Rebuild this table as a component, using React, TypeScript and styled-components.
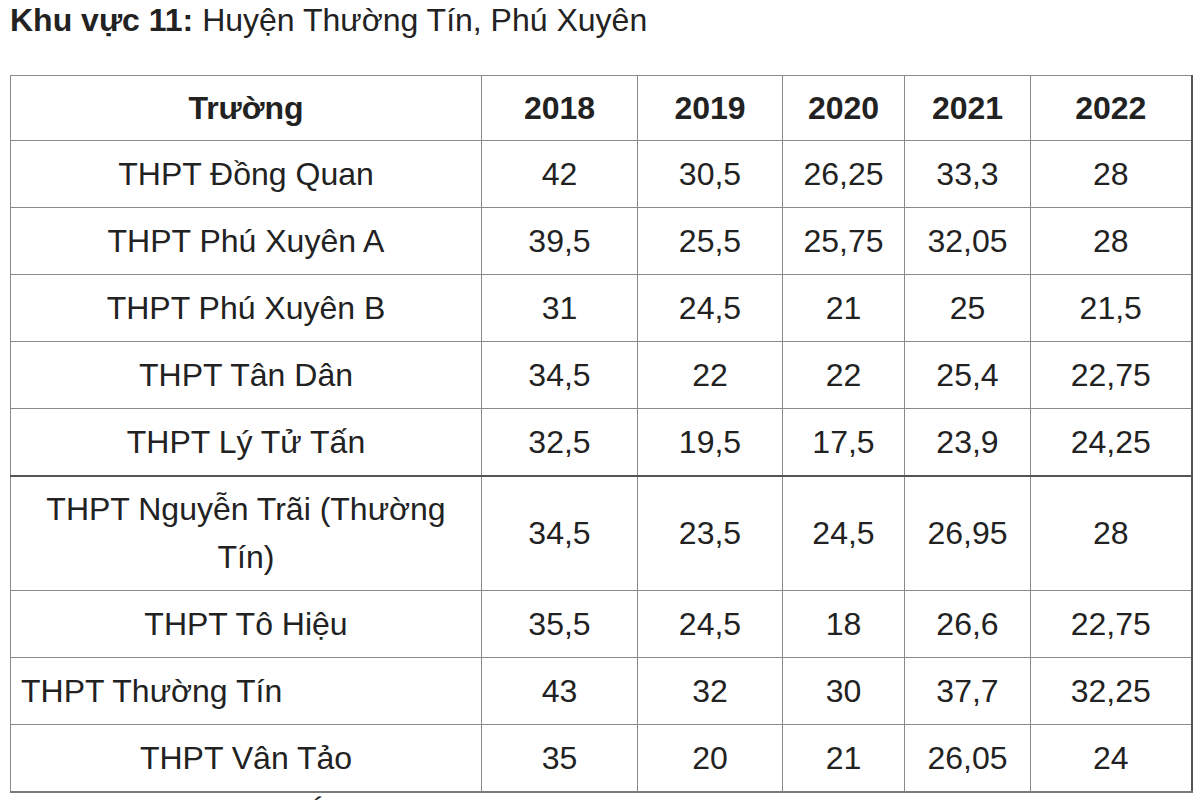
import styled, { createGlobalStyle } from 'styled-components';

const GlobalStyle = createGlobalStyle`
  html, body {
    margin: 0;
    padding: 0;
    background: #ffffff;
  }
  body {
    font-family: 'Liberation Sans', Arial, Helvetica, sans-serif;
    color: #222222;
  }
`;

type TRow = {
  school: string;
  scores: string[];
  align?: 'left' | 'center';
  thickTop?: boolean;
};

const YEARS = ['2018', '2019', '2020', '2021', '2022'];
const COL_WIDTHS = [471, 156, 145, 122, 126, 161];

const ROWS: TRow[] = [
  { school: 'THPT Đồng Quan', scores: ['42', '30,5', '26,25', '33,3', '28'] },
  { school: 'THPT Phú Xuyên A', scores: ['39,5', '25,5', '25,75', '32,05', '28'] },
  { school: 'THPT Phú Xuyên B', scores: ['31', '24,5', '21', '25', '21,5'] },
  { school: 'THPT Tân Dân', scores: ['34,5', '22', '22', '25,4', '22,75'] },
  { school: 'THPT Lý Tử Tấn', scores: ['32,5', '19,5', '17,5', '23,9', '24,25'] },
  {
    school: 'THPT Nguyễn Trãi (Thường Tín)',
    scores: ['34,5', '23,5', '24,5', '26,95', '28'],
    thickTop: true,
  },
  { school: 'THPT Tô Hiệu', scores: ['35,5', '24,5', '18', '26,6', '22,75'] },
  { school: 'THPT Thường Tín', scores: ['43', '32', '30', '37,7', '32,25'], align: 'left' },
  { school: 'THPT Vân Tảo', scores: ['35', '20', '21', '26,05', '24'] },
];

export default function App() {
  return (
    <>
      <GlobalStyle />
      <Page>
        <Heading>
          <strong>Khu vực 11:</strong> Huyện Thường Tín, Phú Xuyên
        </Heading>
        <ScoreTable>
          <colgroup>
            {COL_WIDTHS.map((w, i) => (
              <col key={i} style={{ width: w }} />
            ))}
          </colgroup>
          <thead>
            <tr>
              <HeadCell>Trường</HeadCell>
              {YEARS.map((y) => (
                <HeadCell key={y}>{y}</HeadCell>
              ))}
            </tr>
          </thead>
          <tbody>
            {ROWS.map((row) => (
              <BodyRow key={row.school} $thickTop={!!row.thickTop}>
                <Cell $align={row.align ?? 'center'}>{row.school}</Cell>
                {row.scores.map((s, i) => (
                  <Cell key={i} $align='center'>
                    {s}
                  </Cell>
                ))}
              </BodyRow>
            ))}
          </tbody>
        </ScoreTable>
        {/* next section, only its top edge is in view */}
        <NextHeading>
          <strong>Khu vực 12:</strong> Huyện Ứng Hòa, Mỹ Đức
        </NextHeading>
      </Page>
    </>
  );
}

const Page = styled.div`
  padding: 0 9px 0 10px;
`;

const Heading = styled.p`
  margin: 0 0 35px;
  font-size: 32px;
  line-height: 40px;
  color: #222;

  strong {
    font-weight: 700;
  }
`;

const NextHeading = styled(Heading)`
  margin: 0;
`;

const ScoreTable = styled.table`
  width: 1181px;
  table-layout: fixed;
  border-collapse: collapse;
  border-top: 1px solid #8a8a8a;
  border-left: 1px solid #8a8a8a;
  border-right: 2px solid #555;
  border-bottom: 2px solid #7a7a7a;
  font-size: 32px;
  color: #222;
`;

const HeadCell = styled.th`
  height: 48px;
  padding: 8px 12px;
  border: 1px solid #8a8a8a;
  font-weight: 700;
  line-height: 48px;
  text-align: center;
  vertical-align: middle;
`;

const BodyRow = styled.tr<{ $thickTop: boolean }>`
  td {
    border-top: ${({ $thickTop }) => ($thickTop ? '2px solid #555' : '1px solid #8a8a8a')};
    padding-top: ${({ $thickTop }) => ($thickTop ? '8px' : '9px')};
  }
`;

const Cell = styled.td<{ $align: 'left' | 'center' }>`
  padding: 9px 12px 9px ${({ $align }) => ($align === 'left' ? '10px' : '12px')};
  border: 1px solid #8a8a8a;
  line-height: 48px;
  text-align: ${({ $align }) => $align};
  vertical-align: middle;
  font-weight: 400;
`;
